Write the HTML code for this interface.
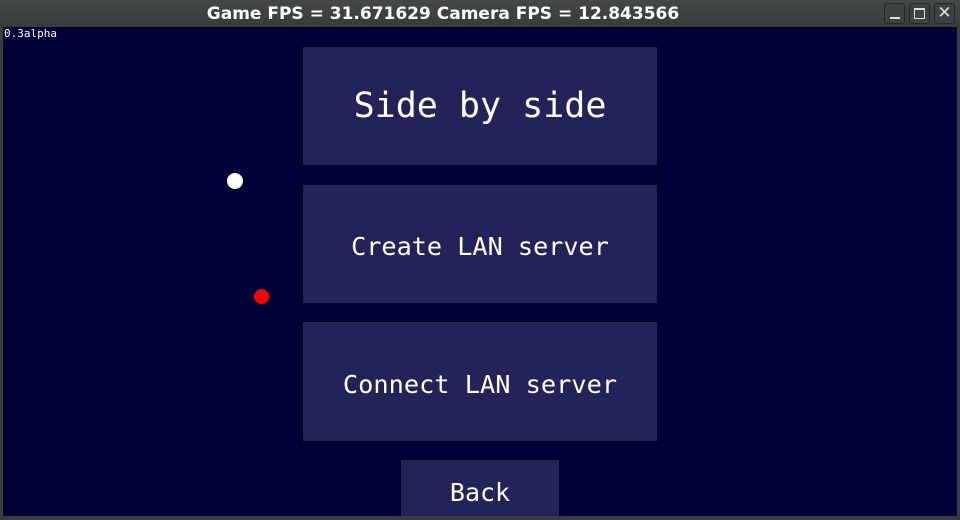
<!DOCTYPE html>
<html><head><style>
body{margin:0;width:960px;height:520px;background:#3a3d3d;position:relative;overflow:hidden;font-family:"DejaVu Sans Mono","Liberation Mono",monospace}
.bar{position:absolute;left:0;top:0;width:960px;height:27px;background:linear-gradient(#454848,#383b3b)}
.title{position:absolute;left:0;top:0;width:886px;height:27px;color:#fff;font:bold 17px "DejaVu Sans",sans-serif;text-align:center;line-height:28px}
.win{position:absolute;left:3px;top:27px;width:954px;height:489px;background:#000038;overflow:hidden}
.b{position:absolute;background:#23235a;color:#fff;text-align:center;box-shadow:0 0 0 3px #00002c}
.ver{position:absolute;left:4px;top:27px;color:#fff;font-size:11px}
.ctl{position:absolute;top:3px;width:21px;height:21px;border:1px solid #252727;border-radius:3px;background:#3e4141;box-sizing:border-box}
</style></head><body>
<div class="bar"></div>
<div class="title">Game FPS = 31.671629 Camera FPS = 12.843566</div>
<div class="ctl" style="left:884px"><div style="position:absolute;left:5px;top:13px;width:10px;height:2px;background:#ddd"></div></div>
<div class="ctl" style="left:909px"><div style="position:absolute;left:4px;top:4px;width:11px;height:11px;border:1px solid #ddd;border-top-width:2px;box-sizing:border-box"></div></div>
<div class="ctl" style="left:934px;color:#ddd;font:17px 'DejaVu Sans',sans-serif;text-align:center;line-height:19px">✕</div>
<div class="win">
<div class="b" style="left:398px;top:433px;width:158px;height:60px;font-size:25px;line-height:66px">Back</div>
</div>
<div class="ver">0.3alpha</div>
<div class="b" style="left:303px;top:47px;width:354px;height:118px;font-size:35px;line-height:118px">Side by side</div>
<div class="b" style="left:303px;top:185px;width:354px;height:118px;font-size:25.2px;line-height:124px">Create LAN server</div>
<div class="b" style="left:303px;top:322px;width:354px;height:119px;font-size:25.3px;line-height:126px">Connect LAN server</div>
<div style="position:absolute;left:227px;top:173px;width:16px;height:16px;border-radius:50%;background:#fff"></div>
<div style="position:absolute;left:254px;top:289px;width:15px;height:15px;border-radius:50%;background:#f00"></div>
</body></html>
